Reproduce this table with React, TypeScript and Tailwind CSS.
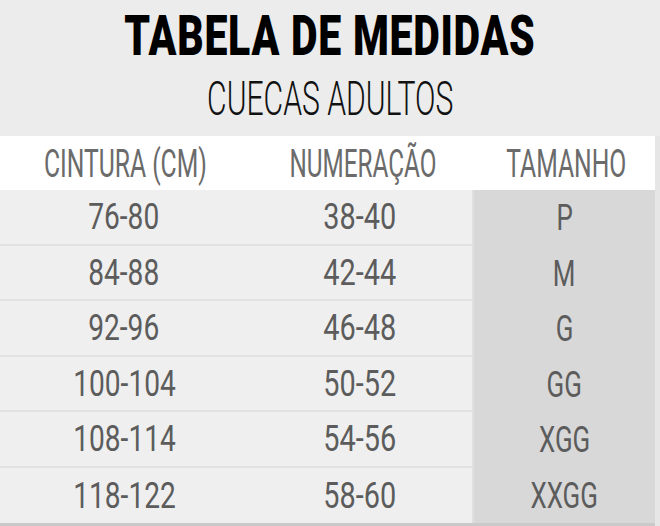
const rows = [
  { cintura: '76-80', numeracao: '38-40', tamanho: 'P' },
  { cintura: '84-88', numeracao: '42-44', tamanho: 'M' },
  { cintura: '92-96', numeracao: '46-48', tamanho: 'G' },
  { cintura: '100-104', numeracao: '50-52', tamanho: 'GG' },
  { cintura: '108-114', numeracao: '54-56', tamanho: 'XGG' },
  { cintura: '118-122', numeracao: '58-60', tamanho: 'XXGG' },
];

function Narrow({ children, className = '' }: { children: React.ReactNode; className?: string }) {
  return <span className={`inline-block whitespace-nowrap ${className}`}>{children}</span>;
}

export default function App() {
  return (
    <div className="w-[660px] h-[526px] overflow-hidden bg-[#ececec] font-['Roboto','Liberation_Sans',sans-serif]">
      <div className="h-[136px] flex flex-col items-center">
        <Narrow className="mt-[6px] text-[55px] leading-[60px] font-black text-black tracking-[1px] scale-x-[0.745]">
          TABELA DE MEDIDAS
        </Narrow>
        <Narrow className="mt-[5px] text-[49px] leading-[56px] font-light text-[#111] scale-x-[0.615]">
          CUECAS ADULTOS
        </Narrow>
      </div>

      <div className="flex">
        <div className="w-[655px] flex flex-col">
          <div className="h-[54px] bg-white grid grid-cols-[248px_226px_181px] items-center text-[38px] text-[#6b6b6b]">
            <div className="text-center"><Narrow className="scale-x-[0.65]">CINTURA (CM)</Narrow></div>
            <div className="text-center"><Narrow className="scale-x-[0.64]">NUMERAÇÃO</Narrow></div>
            <div className="text-center"><Narrow className="scale-x-[0.65]">TAMANHO</Narrow></div>
          </div>

          <div className="grid grid-cols-[248px_226px_181px] text-[37px] text-[#5c5c5c]">
            {rows.map((r, i) => (
              <div key={r.tamanho} className="contents">
                <div className={`h-[55.5px] flex items-center justify-center bg-[#efefef] ${i < rows.length - 1 ? 'border-b-2 border-[#e2e2e2]' : ''}`}>
                  <Narrow className="scale-x-[0.76]">{r.cintura}</Narrow>
                </div>
                <div className={`h-[55.5px] flex items-center justify-center bg-[#efefef] border-r-2 border-[#e0e0e0] ${i < rows.length - 1 ? 'border-b-2 border-b-[#e2e2e2]' : ''}`}>
                  <Narrow className="scale-x-[0.78]">{r.numeracao}</Narrow>
                </div>
                <div className="h-[55.5px] flex items-center justify-center bg-[#d8d8d8]">
                  <Narrow className="scale-x-[0.7]">{r.tamanho}</Narrow>
                </div>
              </div>
            ))}
          </div>
          <div className="h-[3px] bg-[#c9c9c9]" />
        </div>
        <div className="w-[5px] bg-[#e6e6e6]" />
      </div>
    </div>
  );
}
